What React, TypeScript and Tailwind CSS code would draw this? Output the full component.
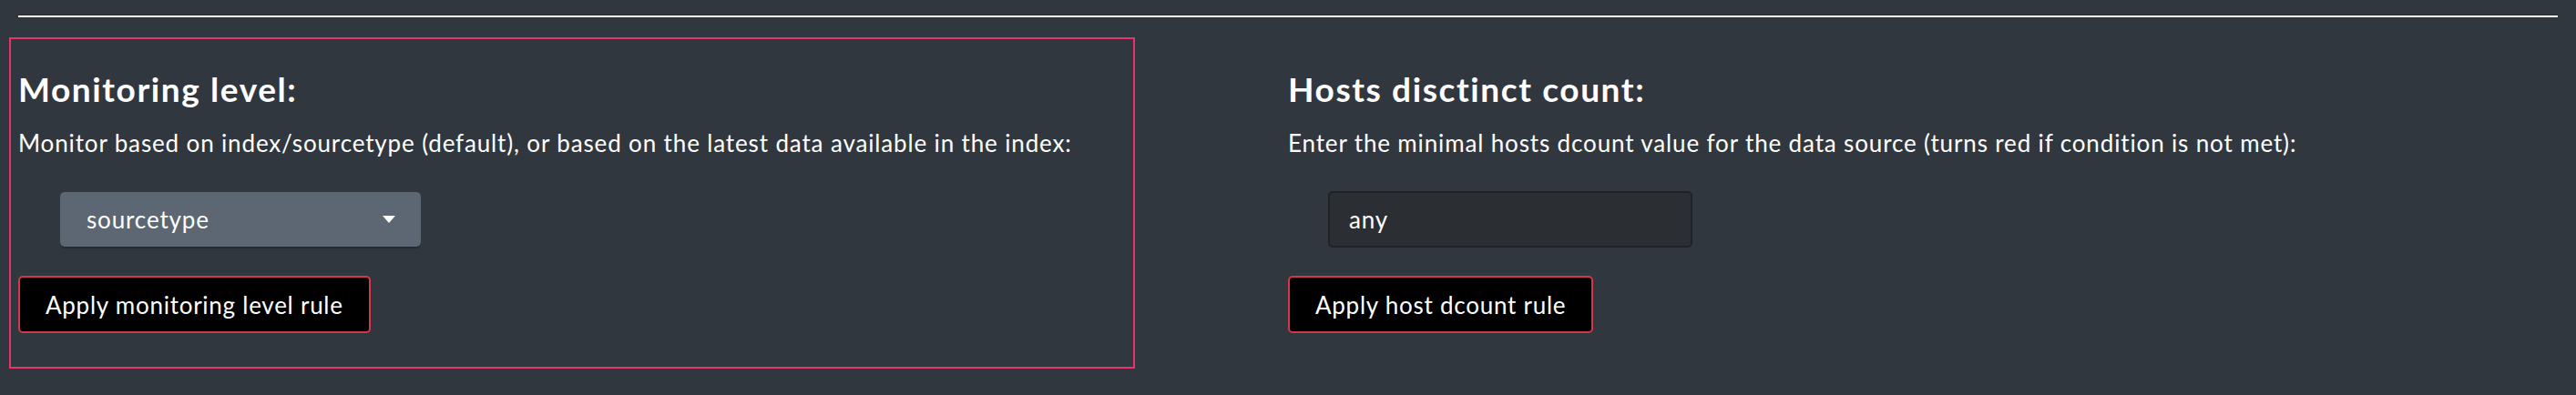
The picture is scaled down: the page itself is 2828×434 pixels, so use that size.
const font = { fontFamily: "Lato, 'Liberation Sans', sans-serif" };

function Caret() {
  return (
    <svg width="14" height="9" viewBox="0 0 14 9" className="shrink-0">
      <path d="M0 0 L14 0 L7 8 Z" fill="#ffffff" />
    </svg>
  );
}

export default function App() {
  return (
    <div className="h-[434px] w-full overflow-hidden bg-[#31373e] text-white" style={font}>
      <div className="px-[20px] pt-[16px]">
        <div className="h-px bg-[#262b30]" />
        <div className="h-[2px] bg-white" />
      </div>

      <div className="mt-[22px] grid grid-cols-2">
        {/* left column, framed */}
        <div className="pl-[10px]">
          <div className="w-[1236px] border-2 border-[#ea3366] px-[8px] pt-[33px] pb-[37px]">
            <h2 className="text-[37px] font-bold leading-[44px] tracking-[1.6px]">Monitoring level:</h2>
            <p className="mt-[22px] text-[26px] leading-[30px] tracking-[0.86px]">
              Monitor based on index/sourcetype (default), or based on the latest data available in the index:
            </p>
            <div className="mt-[39px] ml-[46px] flex h-[60px] w-[396px] items-center justify-between rounded-[5px] bg-[#5c6773] pr-[28px] pl-[29px] shadow-[0_2px_0_#262b30]">
              <span className="text-[26px] leading-none tracking-[0.86px]">sourcetype</span>
              <Caret />
            </div>
            <button className="mt-[32px] flex h-[63px] items-center rounded-[5px] border-2 border-[#d4364a] bg-black px-[28px] text-[26px] leading-none tracking-[0.75px] text-white">
              Apply monitoring level rule
            </button>
          </div>
        </div>

        {/* right column */}
        <div className="pt-[35px]">
          <h2 className="text-[37px] font-bold leading-[44px] tracking-[1.6px]">Hosts disctinct count:</h2>
          <p className="mt-[22px] text-[26px] leading-[30px] tracking-[0.86px]">
            Enter the minimal hosts dcount value for the data source (turns red if condition is not met):
          </p>
          <div className="mt-[38px] ml-[44px] flex h-[62px] w-[400px] items-center rounded-[5px] border-2 border-[#1f2326] bg-[#2b2f33] pl-[21px]">
            <span className="text-[26px] leading-none tracking-[0.86px]">any</span>
          </div>
          <button className="mt-[31px] flex h-[63px] items-center rounded-[5px] border-2 border-[#d4364a] bg-black px-[28px] text-[26px] leading-none tracking-[0.75px] text-white">
            Apply host dcount rule
          </button>
        </div>
      </div>
    </div>
  );
}
